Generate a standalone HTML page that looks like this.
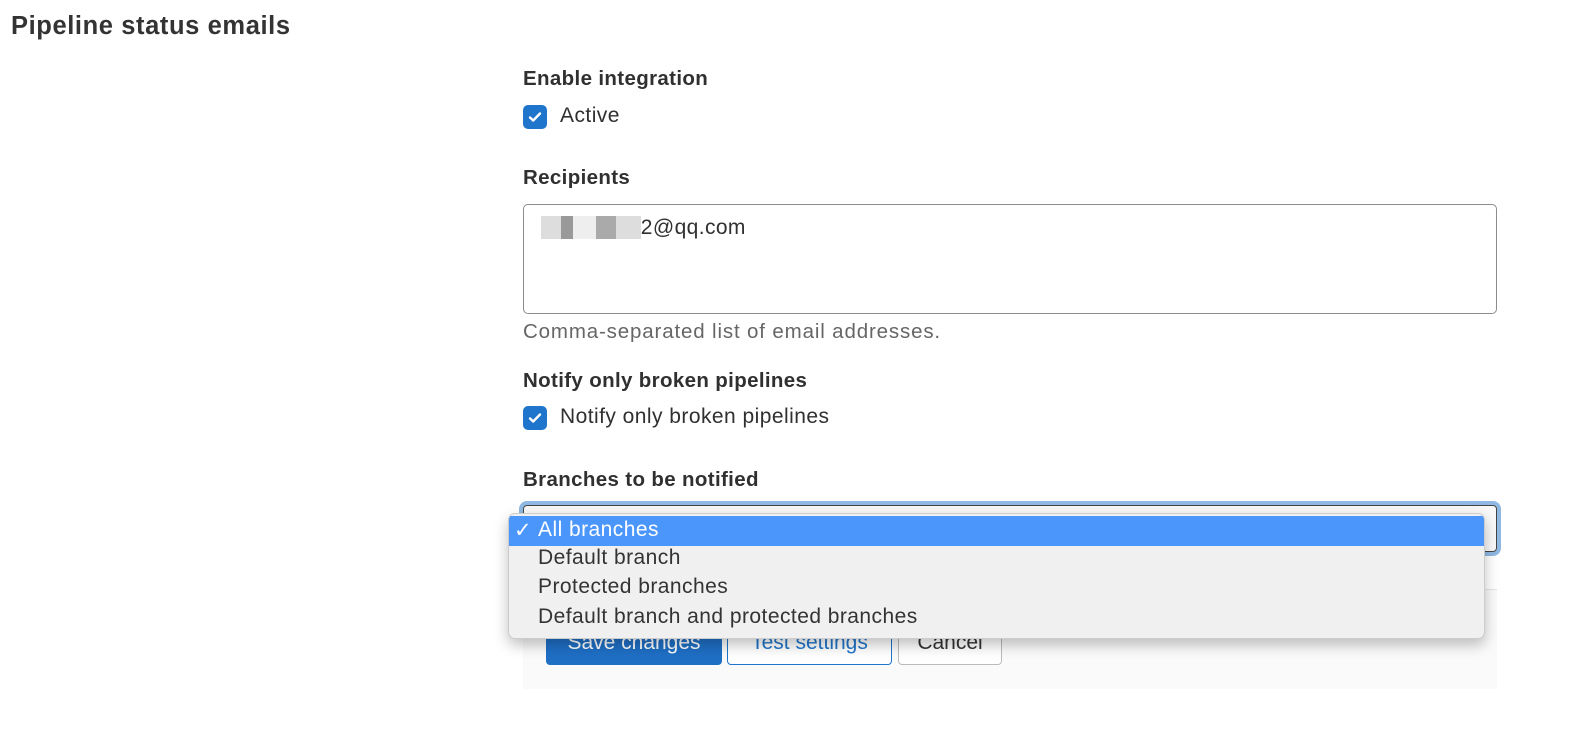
<!DOCTYPE html>
<html><head><style>
*{box-sizing:border-box;margin:0;padding:0}
body{width:1586px;height:737px;background:#fff;font-family:"Liberation Sans",sans-serif;color:#303030;position:relative;overflow:hidden}
.a{position:absolute}
h1{position:absolute;left:11px;top:12px;font-size:25.5px;font-weight:bold;color:#333;letter-spacing:0.6px}
.lbl{position:absolute;left:523px;font-size:20.5px;font-weight:bold;color:#303030;letter-spacing:0.35px}
.cb{position:absolute;left:523px;width:24px;height:24px;border-radius:5px;background:#1f75cb}
.cbt{position:absolute;left:560px;font-size:21px;color:#303030;letter-spacing:0.45px}
</style></head><body>
<h1>Pipeline status emails</h1>
<div class="lbl" style="top:67px">Enable integration</div>
<div class="cb" style="top:105px"><svg width="24" height="24"><path d="M7 12.5l3.2 3L17 8.5" stroke="#fff" stroke-width="2.4" fill="none" stroke-linecap="round" stroke-linejoin="round"/></svg></div>
<div class="cbt" style="top:104px">Active</div>
<div class="lbl" style="top:166px">Recipients</div>
<div class="a" style="left:523px;top:204px;width:974px;height:110px;border:1px solid #8c8c8c;border-radius:5px"></div>
<div class="a" style="left:541px;top:216px;font-size:21px;color:#303030;letter-spacing:0.4px"><span style="background:linear-gradient(90deg,#ddd 0 20%,#999 20% 32%,#eee 32% 55%,#aaa 55% 75%,#ddd 75%);">&nbsp;&nbsp;&nbsp;&nbsp;&nbsp;&nbsp;&nbsp;&nbsp;&nbsp;&nbsp;&nbsp;&nbsp;&nbsp;&nbsp;&nbsp;&nbsp;</span>2@qq.com</div>
<div class="a" style="left:523px;top:320px;font-size:20.5px;color:#666;letter-spacing:0.85px">Comma-separated list of email addresses.</div>
<div class="lbl" style="top:369px">Notify only broken pipelines</div>
<div class="cb" style="top:406px"><svg width="24" height="24"><path d="M7 12.5l3.2 3L17 8.5" stroke="#fff" stroke-width="2.4" fill="none" stroke-linecap="round" stroke-linejoin="round"/></svg></div>
<div class="cbt" style="top:405px">Notify only broken pipelines</div>
<div class="lbl" style="top:468px">Branches to be notified</div>
<div class="a" style="left:519px;top:501px;width:982px;height:55px;border:4px solid #8fb9e3;border-radius:8px"></div>
<div class="a" style="left:523px;top:505px;width:974px;height:47px;border:1.5px solid #444;border-radius:4px;background:#f8f8f8"></div>
<div class="a" style="left:523px;top:589px;width:974px;height:100px;background:#fafafa;border-top:1px solid #e5e5e5"></div>
<div class="a" style="left:546px;top:620px;width:176px;height:45px;background:#1f6fc5;border-radius:4px;color:#fff;font-size:21px;text-align:center;line-height:45px">Save changes</div>
<div class="a" style="left:727px;top:620px;width:165px;height:45px;border:1px solid #1f75cb;background:#fff;border-radius:4px;color:#1f75cb;font-size:21px;text-align:center;line-height:43px">Test settings</div>
<div class="a" style="left:898px;top:620px;width:104px;height:45px;border:1px solid #bbb;background:#fff;border-radius:4px;color:#333;font-size:21px;text-align:center;line-height:43px">Cancel</div>
<div class="a" style="left:508px;top:513px;width:977px;height:126px;background:#f0f0f0;border:1px solid #ccc;border-radius:7px;box-shadow:0 6px 14px rgba(0,0,0,.25);overflow:hidden;font-size:21px;color:#333;letter-spacing:0.45px">
<div style="position:absolute;left:0;top:2px;width:100%;height:30px;background:#4b96fb;color:#fff"><span style="position:absolute;left:5px;top:2px">✓</span><span style="position:absolute;left:29px;top:2px">All branches</span></div>
<div style="position:absolute;left:29px;top:32px">Default branch</div>
<div style="position:absolute;left:29px;top:61px">Protected branches</div>
<div style="position:absolute;left:29px;top:91px">Default branch and protected branches</div>
</div>
</body></html>
